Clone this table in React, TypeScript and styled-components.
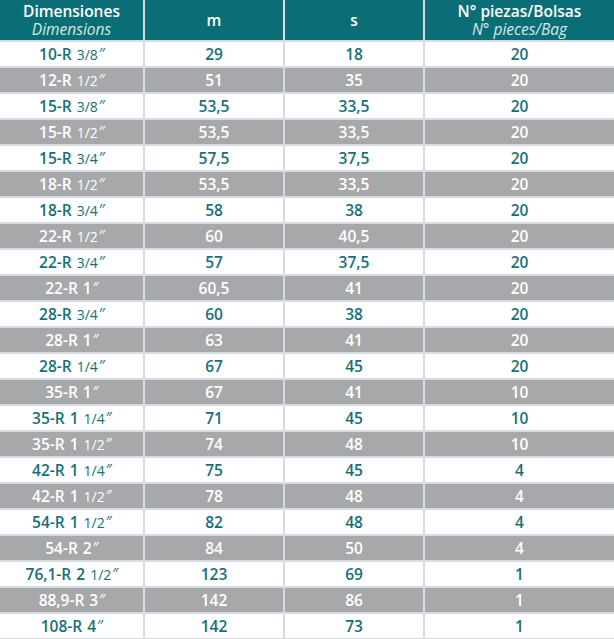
import React from 'react';
import styled, { createGlobalStyle } from 'styled-components';

const GlobalStyle = createGlobalStyle`
  html, body {
    margin: 0;
    padding: 0;
    background: #ffffff;
  }
  body {
    font-family: 'Open Sans', 'Noto Sans', sans-serif;
  }
`;

const Table = styled.div`
  width: 614px;
  display: grid;
  grid-template-columns: 143px 138px 138px 1fr;
  grid-template-rows: 40px;
  grid-auto-rows: 24px;
  column-gap: 2px;
  row-gap: 2px;
  padding-bottom: 1px;
  background: #d7dbe6;
`;

const HeadCell = styled.div`
  background: #0b6e77;
  color: #ffffff;
  display: flex;
  flex-direction: column;
  align-items: center;
  justify-content: center;
  font-size: 15.5px;
  font-weight: 600;
  line-height: 18px;
  text-align: center;
`;

const HeadSub = styled.span`
  font-style: italic;
  font-weight: 400;
  color: #d9e6e8;
`;

const Cell = styled.div<{ shaded: boolean }>`
  background: ${p => (p.shaded ? '#a7a8aa' : '#ffffff')};
  color: ${p => (p.shaded ? '#ffffff' : '#15707a')};
  display: flex;
  align-items: center;
  justify-content: center;
  font-size: 15.5px;
  font-weight: 600;
  white-space: nowrap;
`;

const Frac = styled.span`
  font-size: 14px;
  font-weight: 500;
  margin-left: 5px;
`;

const Whole = styled.span`
  margin-left: 5px;
`;

const Inch = styled.span`
  font-weight: 400;
  margin-left: 1px;
  letter-spacing: -1px;
`;

type Row = { base: string; whole?: string; frac?: string; m: string; s: string; n: string };

const rows: Row[] = [
    { base: '10-R', frac: '3/8', m: '29', s: '18', n: '20' },
    { base: '12-R', frac: '1/2', m: '51', s: '35', n: '20' },
    { base: '15-R', frac: '3/8', m: '53,5', s: '33,5', n: '20' },
    { base: '15-R', frac: '1/2', m: '53,5', s: '33,5', n: '20' },
    { base: '15-R', frac: '3/4', m: '57,5', s: '37,5', n: '20' },
    { base: '18-R', frac: '1/2', m: '53,5', s: '33,5', n: '20' },
    { base: '18-R', frac: '3/4', m: '58', s: '38', n: '20' },
    { base: '22-R', frac: '1/2', m: '60', s: '40,5', n: '20' },
    { base: '22-R', frac: '3/4', m: '57', s: '37,5', n: '20' },
    { base: '22-R', whole: '1', m: '60,5', s: '41', n: '20' },
    { base: '28-R', frac: '3/4', m: '60', s: '38', n: '20' },
    { base: '28-R', whole: '1', m: '63', s: '41', n: '20' },
    { base: '28-R', frac: '1/4', m: '67', s: '45', n: '20' },
    { base: '35-R', whole: '1', m: '67', s: '41', n: '10' },
    { base: '35-R', whole: '1', frac: '1/4', m: '71', s: '45', n: '10' },
    { base: '35-R', whole: '1', frac: '1/2', m: '74', s: '48', n: '10' },
    { base: '42-R', whole: '1', frac: '1/4', m: '75', s: '45', n: '4' },
    { base: '42-R', whole: '1', frac: '1/2', m: '78', s: '48', n: '4' },
    { base: '54-R', whole: '1', frac: '1/2', m: '82', s: '48', n: '4' },
    { base: '54-R', whole: '2', m: '84', s: '50', n: '4' },
    { base: '76,1-R', whole: '2', frac: '1/2', m: '123', s: '69', n: '1' },
    { base: '88,9-R', whole: '3', m: '142', s: '86', n: '1' },
    { base: '108-R', whole: '4', m: '142', s: '73', n: '1' },
];

const Dimension: React.FC<{ row: Row }> = ({ row }) => (
    <>
        {row.base}
        {row.whole && <Whole>{row.whole}</Whole>}
        {row.frac && <Frac>{row.frac}</Frac>}
        <Inch>{'\u2032\u2032'}</Inch>
    </>
);

export default function App() {
    return <>
        <GlobalStyle/>
        <Table>
            <HeadCell>
                Dimensiones
                <HeadSub>Dimensions</HeadSub>
            </HeadCell>
            <HeadCell>m</HeadCell>
            <HeadCell>s</HeadCell>
            <HeadCell>
                N° piezas/Bolsas
                <HeadSub>N° pieces/Bag</HeadSub>
            </HeadCell>
            {rows.map((r, i) => (
                <React.Fragment key={i}>
                    <Cell shaded={i % 2 == 1}><Dimension row={r}/></Cell>
                    <Cell shaded={i % 2 == 1}>{r.m}</Cell>
                    <Cell shaded={i % 2 == 1}>{r.s}</Cell>
                    <Cell shaded={i % 2 == 1}>{r.n}</Cell>
                </React.Fragment>
            ))}
        </Table>
    </>;
}
